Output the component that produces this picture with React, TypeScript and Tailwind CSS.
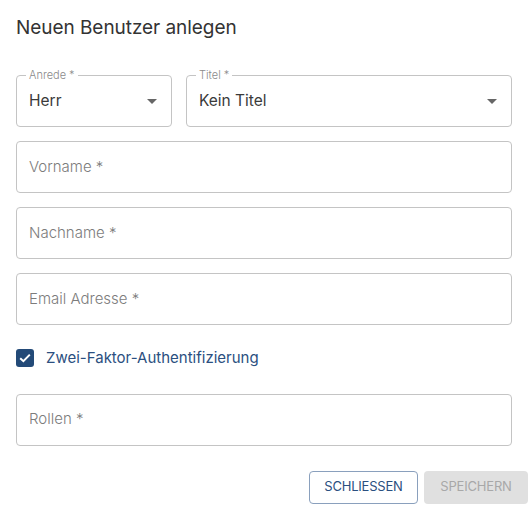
import { useState } from 'react';

function SelectField({ label, value, className }: { label: string; value: string; className?: string }) {
  return (
    <div className={`relative h-[52px] rounded border border-[#c4c4c4] flex items-center pl-3 pr-[14px] ${className ?? ''}`}>
      <span className="absolute -top-[8px] left-[9px] bg-white px-[3px] text-[11px] leading-[14px] text-[#8a8a8a] font-light">
        {label}
      </span>
      <span className="flex-1 text-[15.5px] text-[#3a3a3a]">{value}</span>
      <svg width="10" height="5" viewBox="0 0 10 5" className="ml-2">
        <path d="M0 0 L10 0 L5 5 Z" fill="#666" />
      </svg>
    </div>
  );
}

function TextField({ label }: { label: string }) {
  return (
    <div className="h-[52px] rounded border border-[#c4c4c4] flex items-center px-3">
      <span className="text-[15px] text-[#7c7c7c] font-light">{label}</span>
    </div>
  );
}

export default function App() {
  const [twoFactor, setTwoFactor] = useState(true);

  return (
    <div
      className="w-[529px] h-[508px] bg-white pl-4 pr-[17px] pt-[16px] text-[#333]"
      style={{ fontFamily: 'Inter, "Noto Sans", sans-serif' }}
    >
      <h2 className="text-[19px] leading-[24px] text-[#333] tracking-[-0.05px]">Neuen Benutzer anlegen</h2>

      <div className="mt-[35px] flex flex-col gap-[14px]">
        <div className="flex gap-[14px]">
          <SelectField label="Anrede *" value="Herr" className="w-[156px]" />
          <SelectField label="Titel *" value="Kein Titel" className="flex-1" />
        </div>
        <TextField label="Vorname *" />
        <TextField label="Nachname *" />
        <TextField label="Email Adresse *" />
      </div>

      <label className="mt-[22px] flex items-center gap-3 cursor-pointer">
        <button
          type="button"
          onClick={() => setTwoFactor(!twoFactor)}
          className={`w-[18px] h-[18px] rounded-[3px] flex items-center justify-center ${
            twoFactor ? 'bg-[#234a78]' : 'border-2 border-[#777] bg-white'
          }`}
        >
          {twoFactor && (
            <svg width="12" height="10" viewBox="0 0 12 10">
              <path d="M1.2 5.2 L4.4 8.2 L10.8 1.6" fill="none" stroke="white" strokeWidth="2" />
            </svg>
          )}
        </button>
        <span className="text-[15px] text-[#2b4f80]">Zwei-Faktor-Authentifizierung</span>
      </label>

      <div className="mt-[24px]">
        <TextField label="Rollen *" />
      </div>

      <div className="mt-[25px] flex justify-end gap-[6px] -mr-[16px]">
        <button
          type="button"
          className="h-[33px] w-[109px] rounded border border-[#8aa0bd] text-[13px] text-[#2b4f80] tracking-[-0.2px]"
        >
          SCHLIESSEN
        </button>
        <button
          type="button"
          disabled
          className="h-[33px] w-[104px] rounded bg-[#e0e0e0] text-[13px] text-[#a8a8a8] tracking-[-0.2px]"
        >
          SPEICHERN
        </button>
      </div>
    </div>
  );
}
